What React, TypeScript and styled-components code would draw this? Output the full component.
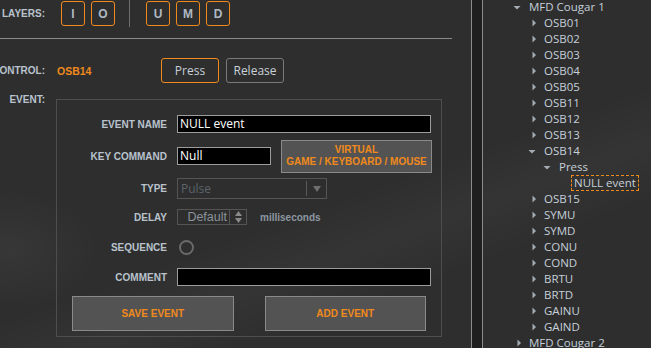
import React from "react";
import styled, { createGlobalStyle } from "styled-components";

const ORANGE = "#f08a1c";
const LABEL = "#b9c3cd";
const UI_FONT = `"Open Sans", "Noto Sans", sans-serif`;
const BOLD_FONT = `"Liberation Sans", Arial, sans-serif`;

const Global = createGlobalStyle`
  html, body { margin: 0; padding: 0; background: #2e2e2e; }
  body { font-family: ${BOLD_FONT}; }
`;

const Screen = styled.div`
  width: 651px;
  height: 348px;
  overflow: hidden;
  display: flex;
  background:
    radial-gradient(ellipse 90px 60px at 10px 250px, rgba(255,255,255,0.045), transparent),
    linear-gradient(160deg, transparent 55%, rgba(255,255,255,0.03) 65%, transparent 75%),
    #2e2e2e;
`;

const LeftPane = styled.div`
  width: 471px;
  flex-shrink: 0;
  display: flex;
  flex-direction: column;
`;

const Toolbar = styled.div`
  width: 452px;
  height: 39px;
  box-sizing: border-box;
  border-bottom: 1px solid #8a8a8a;
  display: flex;
  align-items: flex-start;
  padding-top: 1px;
`;

const SideLabel = styled.div<{ $h: number }>`
  width: 45px;
  flex-shrink: 0;
  display: flex;
  justify-content: flex-end;
  white-space: nowrap;
  font: bold 10px ${BOLD_FONT};
  color: ${LABEL};
  line-height: ${(p) => p.$h}px;
`;

const LayerGroup = styled.div<{ $first?: boolean }>`
  display: flex;
  gap: 6px;
  margin-left: ${(p) => (p.$first ? 16 : 0)}px;
`;

const LayerButton = styled.div`
  width: 24px;
  height: 25px;
  box-sizing: border-box;
  border: 1px solid ${ORANGE};
  border-radius: 3px;
  display: flex;
  align-items: center;
  justify-content: center;
  font: bold 12px ${BOLD_FONT};
  color: #aeb9c4;
`;

const ToolSep = styled.div`
  width: 1px;
  height: 27px;
  margin: -1px 16px 0 14px;
  background: #6e6e6e;
`;

const ControlRow = styled.div`
  display: flex;
  align-items: center;
  height: 25px;
  margin-top: 19px;
`;

const ControlValue = styled.div`
  width: 104px;
  margin-left: 12px;
  font: bold 10.5px ${BOLD_FONT};
  color: ${ORANGE};
`;

const StateButton = styled.div<{ $active?: boolean }>`
  width: 58px;
  height: 25px;
  box-sizing: border-box;
  border: 1px solid ${(p) => (p.$active ? ORANGE : "#7a7a7a")};
  border-radius: 3px;
  display: flex;
  align-items: center;
  justify-content: center;
  font: 12px ${UI_FONT};
  color: #c9d1d9;
  margin-right: 7px;
`;

const EventRow = styled.div`
  display: flex;
  align-items: flex-start;
  margin-top: 11px;
`;

const Panel = styled.div`
  width: 386px;
  height: 238px;
  box-sizing: border-box;
  margin: 5px 0 0 11px;
  border: 1px solid #4e4e4e;
  padding-top: 8px;
  display: flex;
  flex-direction: column;
`;

const FormRow = styled.div<{ $h: number }>`
  height: ${(p) => p.$h}px;
  display: flex;
  align-items: center;
`;

const FieldLabel = styled.div`
  width: 110px;
  margin-right: 10px;
  text-align: right;
  font: bold 10px ${BOLD_FONT};
  color: ${LABEL};
  white-space: nowrap;
`;

const TextBox = styled.div<{ $w: number }>`
  width: ${(p) => p.$w}px;
  height: 18px;
  box-sizing: border-box;
  background: #000;
  border: 1px solid #9c9c9c;
  padding-left: 2px;
  font: 12px ${UI_FONT};
  line-height: 16px;
  color: #ffffff;
  white-space: nowrap;
  overflow: hidden;
`;

const VirtualButton = styled.div`
  width: 151px;
  height: 33px;
  margin-left: 10px;
  box-sizing: border-box;
  background: #535353;
  border: 1px solid #8a8a8a;
  display: flex;
  flex-direction: column;
  align-items: center;
  justify-content: center;
  font: bold 10px ${BOLD_FONT};
  line-height: 12px;
  color: ${ORANGE};
  text-align: center;
`;

const Select = styled.div`
  width: 150px;
  height: 21px;
  box-sizing: border-box;
  border: 1px solid #555;
  display: flex;
  align-items: center;
`;

const SelectText = styled.div`
  flex: 1;
  padding-left: 3px;
  font: 12px ${UI_FONT};
  color: #5c646c;
`;

const SelectArrow = styled.div`
  width: 19px;
  height: 15px;
  border-left: 1px solid #5a5a5a;
  display: flex;
  align-items: center;
  justify-content: center;
`;

const Spinner = styled.div`
  width: 70px;
  height: 16px;
  box-sizing: border-box;
  border: 1px solid #555;
  display: flex;
`;

const SpinText = styled.div`
  flex: 1;
  text-align: right;
  padding-right: 2px;
  font: 12.5px ${BOLD_FONT};
  line-height: 14px;
  color: #8b939b;
`;

const SpinArrows = styled.div`
  width: 16px;
  border-left: 1px solid #555;
  display: flex;
  align-items: center;
  justify-content: center;
`;

const Unit = styled.div`
  margin-left: 13px;
  font: bold 10px ${BOLD_FONT};
  color: #8d97a1;
`;

const Radio = styled.div`
  width: 15px;
  height: 15px;
  box-sizing: border-box;
  border: 2px solid #6a6a6a;
  border-radius: 50%;
  margin-left: 2px;
`;

const ButtonRow = styled.div`
  display: flex;
  gap: 31px;
  padding: 0 15px;
  margin-top: 7px;
`;

const ActionButton = styled.div`
  flex: 1;
  height: 35px;
  box-sizing: border-box;
  background: #535353;
  border: 1px solid #8a8a8a;
  display: flex;
  align-items: center;
  justify-content: center;
  font: bold 10px ${BOLD_FONT};
  color: ${ORANGE};
`;

const Splitter = styled.div`
  width: 12px;
  flex-shrink: 0;
  box-sizing: border-box;
  border-left: 1px solid #8c8c8c;
  border-right: 1px solid #8c8c8c;
  background: #1f1f1f;
`;

const TreePane = styled.div`
  flex: 1;
  overflow: hidden;
`;

const TreeList = styled.div`
  margin-top: -1px;
  display: flex;
  flex-direction: column;
`;

const TreeRow = styled.div<{ $level: number }>`
  height: 16px;
  display: flex;
  align-items: center;
  padding-left: ${(p) => 30 + p.$level * 15}px;
  white-space: nowrap;
`;

const Caret = styled.svg`
  width: 16px;
  height: 16px;
  flex-shrink: 0;
`;

const TreeText = styled.span<{ $selected?: boolean }>`
  font: 11.5px ${UI_FONT};
  color: #c6d0da;
  line-height: 14px;
  ${(p) =>
    p.$selected
      ? `border: 1px dashed ${ORANGE}; margin-left: -3px; padding: 0 2px;`
      : ""}
`;

type Node = { level: number; text: string; caret: "down" | "right" | "none"; selected?: boolean };

const osbA = ["OSB01", "OSB02", "OSB03", "OSB04", "OSB05", "OSB11", "OSB12", "OSB13"];
const osbB = ["OSB15", "SYMU", "SYMD", "CONU", "COND", "BRTU", "BRTD", "GAINU", "GAIND"];

const nodes: Node[] = [
  { level: 0, text: "MFD Cougar 1", caret: "down" },
  ...osbA.map((t) => ({ level: 1, text: t, caret: "right" as const })),
  { level: 1, text: "OSB14", caret: "down" },
  { level: 2, text: "Press", caret: "down" },
  { level: 3, text: "NULL event", caret: "none", selected: true },
  ...osbB.map((t) => ({ level: 1, text: t, caret: "right" as const })),
  { level: 0, text: "MFD Cougar 2", caret: "right" },
];

function CaretIcon({ dir }: { dir: Node["caret"] }) {
  return (
    <Caret viewBox="0 0 16 16">
      {dir === "right" && <polygon points="4.5,4.5 8,8 4.5,11.5" fill="#a3acb5" />}
      {dir === "down" && <polygon points="0.5,7 7.5,7 4,10.5" fill="#a3acb5" />}
    </Caret>
  );
}

export default function App() {
  return (
    <>
      <Global />
      <Screen>
        <LeftPane>
          <Toolbar>
            <SideLabel $h={25}>LAYERS:</SideLabel>
            <LayerGroup $first>
              <LayerButton>I</LayerButton>
              <LayerButton>O</LayerButton>
            </LayerGroup>
            <ToolSep />
            <LayerGroup>
              <LayerButton>U</LayerButton>
              <LayerButton>M</LayerButton>
              <LayerButton>D</LayerButton>
            </LayerGroup>
          </Toolbar>

          <ControlRow>
            <SideLabel $h={25}>CONTROL:</SideLabel>
            <ControlValue>OSB14</ControlValue>
            <StateButton $active>Press</StateButton>
            <StateButton>Release</StateButton>
          </ControlRow>

          <EventRow>
            <SideLabel $h={12}>EVENT:</SideLabel>
            <Panel>
              <FormRow $h={32}>
                <FieldLabel>EVENT NAME</FieldLabel>
                <TextBox $w={254}>NULL event</TextBox>
              </FormRow>
              <FormRow $h={32}>
                <FieldLabel>KEY COMMAND</FieldLabel>
                <TextBox $w={94}>Null</TextBox>
                <VirtualButton>
                  <span>VIRTUAL</span>
                  <span>GAME / KEYBOARD / MOUSE</span>
                </VirtualButton>
              </FormRow>
              <FormRow $h={33}>
                <FieldLabel>TYPE</FieldLabel>
                <Select>
                  <SelectText>Pulse</SelectText>
                  <SelectArrow>
                    <svg width="8" height="6" viewBox="0 0 8 6">
                      <polygon points="0,0 8,0 4,6" fill="#6e6e6e" />
                    </svg>
                  </SelectArrow>
                </Select>
              </FormRow>
              <FormRow $h={24}>
                <FieldLabel>DELAY</FieldLabel>
                <Spinner>
                  <SpinText>Default</SpinText>
                  <SpinArrows>
                    <svg width="7" height="12" viewBox="0 0 7 12">
                      <polygon points="3.5,0 7,5 0,5" fill="#8a8a8a" />
                      <polygon points="0,7 7,7 3.5,12" fill="#8a8a8a" />
                    </svg>
                  </SpinArrows>
                </Spinner>
                <Unit>milliseconds</Unit>
              </FormRow>
              <FormRow $h={36}>
                <FieldLabel>SEQUENCE</FieldLabel>
                <Radio />
              </FormRow>
              <FormRow $h={24}>
                <FieldLabel>COMMENT</FieldLabel>
                <TextBox $w={254} />
              </FormRow>
              <ButtonRow>
                <ActionButton>SAVE EVENT</ActionButton>
                <ActionButton>ADD EVENT</ActionButton>
              </ButtonRow>
            </Panel>
          </EventRow>
        </LeftPane>

        <Splitter />

        <TreePane>
          <TreeList>
            {nodes.map((n, i) => (
              <TreeRow key={i} $level={n.level}>
                <CaretIcon dir={n.caret} />
                <TreeText $selected={n.selected}>{n.text}</TreeText>
              </TreeRow>
            ))}
          </TreeList>
        </TreePane>
      </Screen>
    </>
  );
}
